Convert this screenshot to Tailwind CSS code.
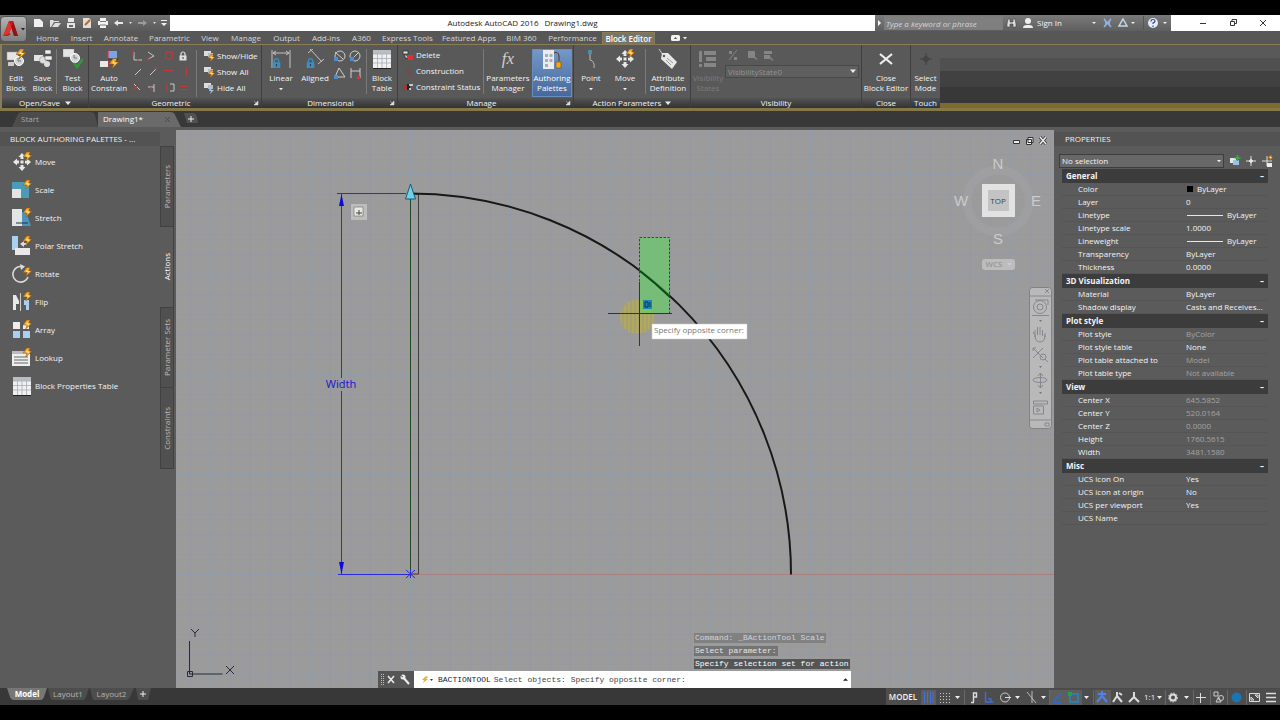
<!DOCTYPE html>
<html lang="en">
<head>
<meta charset="utf-8">
<title>Autodesk AutoCAD 2016 - Drawing1.dwg</title>
<script src="https://cdn.jsdelivr.net/npm/@tailwindcss/browser@4"></script>
</head>
<body class="min-h-screen flex flex-col bg-black text-[8px] leading-[10px] text-gray-100 font-['Open_Sans','Noto_Sans',sans-serif]">

<!-- shared symbols -->
<svg class="hidden">
  <symbol id="bolt" viewBox="0 0 10 10"><path d="M4 0h4L6.500 3.500H10L3 10l1.500-4.500H0z" fill="#f5a623" stroke="#8a5510" stroke-width=".6"/><path d="M5 2L3 5h3L5 7l3-3H5z" fill="#ffe9a0"/></symbol>
  <symbol id="move" viewBox="0 0 20 20"><path d="M10 1l3.500 4h-2v2h-3V5h-2zM10 19l3.500-4h-2v-2h-3v2h-2zM1 10l4-3.500v2h2v3H5v2zM19 10l-4-3.500v2h-2v3h2v2z" fill="#e8e8e8"/><rect x="8.500" y="8.500" width="3" height="3" fill="#e8e8e8"/><use href="#bolt" x="11" y="0" width="9" height="9"/></symbol>
  <symbol id="grid" viewBox="0 0 20 20"><path d="M1 1h18v18H1z" fill="#f0f0f0"/><path d="M1 1h18v4H1z" fill="#b9bec6"/><path d="M1 9.500h18M1 14h18M5.500 5v14M10 5v14M14.500 5v14M1 5h18" stroke="#a8acb2" stroke-width=".8"/><path d="M1 19.500h18" stroke="#222"/></symbol>
  <symbol id="blk" viewBox="0 0 20 20"><rect x="1" y="3" width="11" height="8" fill="#e4e4e4" stroke="#999" stroke-width=".5"/><circle cx="13" cy="12" r="4.500" fill="#d4d4d4" stroke="#fff"/><path d="M12 9v3h3" fill="none" stroke="#777"/></symbol>
  <symbol id="lock" viewBox="0 0 10 10"><path d="M3 5V3a2 2 0 0 1 4 0v2" fill="none" stroke="currentColor" stroke-width="1.200"/><rect x="1.500" y="4.500" width="7" height="5" fill="currentColor"/><path d="M5 6v2" stroke="#333"/></symbol>
  <symbol id="caret" viewBox="0 0 6 6"><path d="M0 1.500h6L3 5z" fill="#eee"/></symbol>
  <symbol id="corner" viewBox="0 0 6 6"><path d="M1 1l3 3M5 1v4H1z" stroke="#ddd" fill="#ddd" stroke-width=".5"/></symbol>
  <symbol id="show" viewBox="0 0 12 12"><rect x="1" y="1" width="7" height="5" fill="#dedede"/><rect x="5" y="3" width="5" height="4" fill="#b8bcc0"/></symbol>
</svg>

<div class="h-[15px] shrink-0 bg-black"></div>

<!-- title bar -->
<header class="relative flex h-4 shrink-0 items-stretch bg-white">
  <button aria-label="Application menu" class="absolute left-0 top-px z-10 flex h-[26px] w-[27px] items-center justify-center rounded-sm border border-[#555] bg-gradient-to-b from-[#b4b4b4] to-[#7f7f7f]">
    <svg class="h-[22px] w-[25px]" viewBox="0 0 25 22"><path d="M8 3h4l5 15h-4l-2.500-8-2.500 5 2 1-3 2H2z" fill="#c41d1d"/><path d="M8 3l2.500 7L7 16l-5 2z" fill="#e0352e"/><path d="M10.500 10L12 3l5 15h-4z" fill="#961313"/><path d="M20 10h4l-2 2.500z" fill="#222"/></svg>
  </button>
  <nav aria-label="Quick access" class="flex w-[170px] shrink-0 items-center bg-gradient-to-b from-[#737373] to-[#5a5a5a] pl-[32px]">
    <svg class="h-4 w-[138px]" viewBox="0 0 138 16">
      <path d="M2 4h6l3 3v5H2z" fill="#f0f0f0"/>
      <path d="M18 5h3l1 1h5v1h-5l-3 5h-1zM20 12l3-4h6l-3 4z" fill="#ddd"/>
      <path d="M36 3h6v4h-6zM35 8h8v5h-8z" fill="#e4e4e4"/><path d="M37 10h4v2h-4z" fill="#666"/>
      <path d="M51 3h6l2 2v8h-8z" fill="#ddd"/><path d="M53 10l5-5" stroke="#b8672d" stroke-width="2"/>
      <path d="M68 3h6v3h-6zM66 6h10v4H66zM68 10h6v3h-6z" fill="#f2f2f2"/><path d="M68 6.500h6M68 10h6" stroke="#777"/>
      <path d="M82 8l4-3v2h5v2h-5v2z" fill="#e8e8e8"/><path d="M97 7h3l-1.500 2z" fill="#ddd"/>
      <path d="M115 8l-4-3v2h-5v2h5v2z" fill="#9a9a9a"/><path d="M121 7h3l-1.500 2z" fill="#ddd"/>
      <path d="M129 5h6v1h-6zM129 8h6l-3 3z" fill="#f0f0f0"/>
    </svg>
  </nav>
  <h1 class="flex flex-1 items-center justify-center gap-[6px] text-[#222]"><span>Autodesk AutoCAD 2016</span><span>Drawing1.dwg</span></h1>
  <div class="flex w-[296px] shrink-0 items-center bg-gradient-to-b from-[#7a7a7a] to-[#5f5f5f]">
    <svg class="h-3 w-[9px]" viewBox="0 0 9 12"><path d="M3 3l3 3-3 3z" fill="#fff"/></svg>
    <input aria-label="Search" placeholder="Type a keyword or phrase" class="h-[14px] w-[119px] border border-[#7d7d7d] bg-[#7f7f7f] px-px italic placeholder:text-gray-300">
    <svg class="h-4 w-[34px]" viewBox="0 0 34 16"><path d="M5 4h2v3h3V4h2l1 5v3h-3V9H7v3H4V9z" fill="#ddd" stroke="#444" stroke-width=".6"/><circle cx="25" cy="6" r="3" fill="#eee"/><path d="M20 13q0-3 4-3h2q4 0 4 3z" fill="#eee"/></svg>
    <button class="w-[55px] text-left">Sign In</button>
    <svg class="h-4 w-[77px]" viewBox="0 0 77 16"><path d="M0 7h4l-2 2z" fill="#eee"/><path d="M12 4q4 4 0 8M19 4q-4 4 0 8M12 4l7 8M19 4l-7 8" stroke="#8fb1e6" stroke-width="1.500" fill="none"/><path d="M31 4l4 7h-8z" fill="none" stroke="#c7d5ec" stroke-width="1.500"/><path d="M39 7h4l-2 2z" fill="#eee"/><path d="M51.500 1v14" stroke="#555"/><circle cx="61" cy="8" r="5" fill="#e6ebf7"/><path d="M71 7h4l-2 2z" fill="#eee"/><path d="M59 6.500q0-2 2-2t2 1.500-2 2v1M61 10.500v1.500" stroke="#334a8f" stroke-width="1.200" fill="none"/></svg>
  </div>
  <div class="flex w-[109px] shrink-0 items-center pl-[17px]">
    <button aria-label="Minimize" class="w-[30px]"><svg class="mx-auto size-[10px]" viewBox="0 0 10 10"><path d="M2 5.500h6" stroke="#333"/></svg></button>
    <button aria-label="Restore" class="w-[30px]"><svg class="mx-auto size-[10px]" viewBox="0 0 10 10"><path d="M2.500 3.500h4v4h-4zM4 3.500v-2h4.500v4h-2" fill="none" stroke="#333"/></svg></button>
    <button aria-label="Close" class="w-[30px]"><svg class="mx-auto size-[10px]" viewBox="0 0 10 10"><path d="M2 2l6 6M8 2l-6 6" stroke="#333"/></svg></button>
  </div>
</header>

<!-- ribbon tabs -->
<nav aria-label="Ribbon tabs" class="flex h-[14px] shrink-0 items-stretch border-b border-[#8a7d55] bg-[#575757] pl-[30px] text-[#d6d6d6]">
  <button class="w-[35px]">Home</button><button class="w-[33px]">Insert</button><button class="w-[46px]">Annotate</button><button class="w-[51px]">Parametric</button><button class="w-[30px]">View</button><button class="w-[42px]">Manage</button><button class="w-[39px]">Output</button><button class="w-[40px]">Add-ins</button><button class="w-[31px]">A360</button><button class="w-[61px]">Express Tools</button><button class="w-[62px]">Featured Apps</button><button class="w-[43px]">BIM 360</button><button class="w-[59px]">Performance</button>
  <button class="mt-px w-[53px] border-x border-t border-[#857b58] bg-[#77746a] font-semibold text-white">Block Editor</button>
  <button aria-label="Minimize ribbon" class="w-[48px]"><svg class="mx-auto h-2 w-4" viewBox="0 0 16 8"><rect y="1" width="9" height="6" rx="1.500" fill="#f2f2f2"/><path d="M3 5l1.500-2L6 5z" fill="#444"/><path d="M12 3h4l-2 2.500z" fill="#eee"/></svg></button>
</nav>

<!-- ribbon -->
<section aria-label="Block Editor ribbon" class="flex h-[66px] shrink-0 border-b-[3px] border-[#857848] bg-[#595959] text-center">
  <div class="flex w-[89px] shrink-0 flex-col border-l-2 border-r border-l-[#8a7d55] border-r-[#3f3f3f]">
    <div class="flex flex-1 pt-1">
      <button class="flex w-[28px] flex-col items-center"><svg class="size-5" viewBox="0 0 20 20"><use href="#blk"/><rect x="2" y="13" width="6" height="4" fill="#ccc"/><use href="#bolt" x="10" y="0" width="10" height="10"/></svg><span class="pt-1">Edit<br>Block</span></button>
      <button class="flex w-[25px] flex-col items-center"><svg class="size-5" viewBox="0 0 20 20"><rect x="1" y="6" width="9" height="6" fill="#e4e4e4"/><circle cx="10" cy="11" r="3.500" fill="#ddd" stroke="#888" stroke-width=".5"/><path d="M12 1h6v4h-6zM12 7h7v4h-7z" fill="#eee" stroke="#444" stroke-width=".5"/><circle cx="14" cy="15" r="3" fill="#ddd"/></svg><span class="pt-1">Save<br>Block</span></button>
      <button class="mb-1 ml-px flex flex-1 flex-col items-center border-l border-[#7a7a7a]"><svg class="size-5" viewBox="0 0 20 20"><g transform="translate(-1 -3)"><use href="#blk"/></g><path d="M11 14l3 4 6-8" fill="none" stroke="#2f9a35" stroke-width="2.500"/></svg><span class="pt-1">Test<br>Block</span></button>
    </div>
    <div class="flex h-[10px] items-center justify-center gap-[5px] bg-gradient-to-b from-[#545454] to-[#333]">Open/Save <svg class="size-[6px]"><use href="#caret"/></svg></div>
  </div>

  <div class="flex w-[173px] shrink-0 flex-col border-r border-[#3f3f3f]">
    <div class="flex flex-1 pt-1">
      <button class="flex w-[40px] flex-col items-center"><svg class="size-5" viewBox="0 0 20 20"><path d="M9 2h9v8H9z" fill="#7aa4e8"/><path d="M9 1v18" stroke="#d33" stroke-width="1.200"/><path d="M1 12h8v6H1z" fill="#e8e8e8"/><path d="M9 10h10" stroke="#222"/><use href="#bolt" x="10" y="9" width="10" height="11"/></svg><span class="pt-1">Auto<br>Constrain</span></button>
      <svg class="h-[48px] w-[66px]" viewBox="129 49 66 48" fill="none" role="img" aria-label="Geometric constraints">
        <g stroke="#c8c8c8"><path d="M134 52v8h8M148 52l6 4-6 3"/><path d="M135 75l6-6M150 75l6-6" /><path d="M134 84l6 6M148 87h6M154 84v8M170 84h4v7h-4"/></g>
        <g stroke="#c03a3a" stroke-width="1.200"><path d="M133 50v5M137 60h2M150 57l-4 3"/><circle cx="169" cy="56" r="3.500"/><path d="M165 52h8M164 70.500h10M186.500 67v9M155 69l2-2M133 90l4-4M167 84v7M180 86.500h8M180 89.500h8M151 87v3"/></g>
        <use href="#lock" x="178" y="51" width="10" height="10" color="#dedede"/>
      </svg>
      <div class="my-px ml-px flex flex-col justify-between border-l border-[#7a7a7a] pb-[3px] pl-[6px]">
        <button class="flex h-3 items-center gap-[2px]"><svg class="size-3"><use href="#show"/><use href="#bolt" x="5" y="4" width="7" height="8"/></svg>Show/Hide</button>
        <button class="flex h-3 items-center gap-[2px]"><svg class="size-3"><use href="#show"/><use href="#bolt" x="5" y="4" width="7" height="8"/></svg>Show All</button>
        <button class="flex h-3 items-center gap-[2px]"><svg class="size-3"><use href="#show"/><path d="M7 5h3L8 8h3l-4 4 1-3H6z" fill="#9cc6ea"/></svg>Hide All</button>
      </div>
    </div>
    <div class="flex h-[10px] items-center bg-gradient-to-b from-[#545454] to-[#333] pr-[2px]"><span class="flex-1">Geometric</span><svg class="size-[6px]"><use href="#corner"/></svg></div>
  </div>

  <div class="flex w-[136px] shrink-0 flex-col border-r border-[#3f3f3f]">
    <div class="flex flex-1 pt-1">
      <button class="flex w-[38px] flex-col items-center"><svg class="size-5" viewBox="0 0 20 20"><path d="M1 1v18M19 1v18M2 4h16M5 2L2 4l3 2M15 2l3 2-3 2" stroke="#c4c4c4" fill="none"/><use href="#lock" x="0" y="8" width="11" height="12" color="#3c8fc4"/></svg><span class="pt-1">Linear</span><svg class="mt-1 size-1"><use href="#caret" width="4" height="4"/></svg></button>
      <button class="flex w-[30px] flex-col items-center"><svg class="size-5" viewBox="0 0 20 20"><path d="M5 0l12 13M3 4l6-5M13 15l6-5" stroke="#c4c4c4" fill="none"/><use href="#lock" x="0" y="8" width="11" height="12" color="#3c8fc4"/></svg><span class="pt-1">Aligned</span></button>
      <svg class="h-[32px] w-[34px] " viewBox="330 48 34 32" fill="none" role="img" aria-label="Dimension constraints"><g stroke="#cfcfcf"><circle cx="340" cy="55" r="5"/><circle cx="355" cy="55" r="5"/><path d="M335 51l8 7M350 60l9-9M335 76l4-9 6 9zM351 67v10M360 67v10M351 70h9"/></g><path d="M334 56h4v4h-4zM350 56h4v4h-4zM334 74h4v4h-4z" fill="#4a8ed0"/><path d="M357 75h3v3h-3z" fill="#d33"/></svg>
      <button class="mb-1 ml-[2px] flex flex-1 flex-col items-center border-l border-[#7a7a7a]"><svg class="size-5"><use href="#grid"/></svg><span class="pt-1">Block<br>Table</span></button>
    </div>
    <div class="flex h-[10px] items-center bg-gradient-to-b from-[#545454] to-[#333] pr-[2px]"><span class="flex-1 pl-[26px]">Dimensional</span><svg class="ml-4 size-[6px]"><use href="#corner"/></svg></div>
  </div>

  <div class="flex w-[176px] shrink-0 flex-col border-r border-[#3f3f3f]">
    <div class="flex flex-1 pt-1">
      <div class="mb-1 flex w-[86px] flex-col justify-between border-r border-[#7a7a7a] pb-px pl-1">
        <button class="flex h-3 items-center gap-[2px]"><svg class="size-3" viewBox="0 0 12 12"><path d="M1 2h5v3H1zM3 5v4h3" fill="#ddd" stroke="#222" stroke-width=".7"/><path d="M6 6h5v5H6z" fill="#e03030"/></svg>Delete</button>
        <button class="flex h-3 items-center gap-[2px]"><svg class="size-3" viewBox="0 0 12 12"><path d="M3 2l6 8M9 2L5 6l4 5" stroke="#a83232" stroke-dasharray="2 1" fill="none"/></svg>Construction</button>
        <button class="flex h-3 items-center gap-[2px]"><svg class="size-3" viewBox="0 0 12 12"><path d="M1 4h4v4H1z" fill="#a33"/><path d="M5 3h3v6H5z" fill="#222"/><path d="M7 4h4M7 8h2" stroke="#eee" stroke-width="1.500"/></svg><span class="whitespace-nowrap">Constraint Status</span></button>
      </div>
      <button class="flex w-[48px] flex-col items-center"><span class="h-5 font-['Liberation_Serif',serif] text-[17px] leading-5 italic text-[#d0d0d0]">fx</span><span class="pt-1">Parameters<br>Manager</span></button>
      <button class="flex h-[48px] w-[40px] flex-col items-center border border-[#6a8dbd] bg-gradient-to-b from-[#7399c8] to-[#47689c]"><svg class="size-5" viewBox="0 0 20 20"><rect x="1" y="0" width="11" height="19" fill="#e9edf2"/><path d="M3 4h3v3H3zM7.500 4h3v3h-3zM3 9h3v3H3zM7.500 9h3v3h-3zM3 14h3v3H3z" fill="#a7aeb8"/><path d="M12 3q4-2 5 3v5" fill="none" stroke="#55331c"/><rect x="14" y="12" width="5" height="6" fill="#f0a820" stroke="#76500c" stroke-width=".6"/></svg><span class="pt-[3px] text-white">Authoring<br>Palettes</span></button>
    </div>
    <div class="flex h-[10px] items-center bg-gradient-to-b from-[#545454] to-[#333] pr-[2px]"><span class="flex-1">Manage</span><svg class="size-[6px]"><use href="#corner"/></svg></div>
  </div>

  <div class="flex w-[117px] shrink-0 flex-col border-r border-[#3f3f3f]">
    <div class="flex flex-1 pt-1">
      <button class="flex w-[34px] flex-col items-center"><svg class="size-5" viewBox="0 0 20 20"><rect x="7" y="1" width="4" height="4" fill="#4a8fae"/><path d="M9 5v6q5 1 4 8" stroke="#bbb" fill="none"/></svg><span class="pt-1">Point</span><svg class="mt-1 size-1"><use href="#caret" width="4" height="4"/></svg></button>
      <button class="flex w-[34px] flex-col items-center"><svg class="size-5"><use href="#move"/></svg><span class="pt-1">Move</span><svg class="mt-1 size-1"><use href="#caret" width="4" height="4"/></svg></button>
      <button class="mb-1 ml-[3px] flex flex-1 flex-col items-center border-l border-[#7a7a7a]"><svg class="size-5" viewBox="0 0 20 20"><path d="M1 0l4 6" stroke="#ccc"/><path d="M4 4h6l9 9-5 7-11-10z" fill="#e8e8e8"/><circle cx="6" cy="7" r="1.200" fill="#555"/><path d="M9 9l6 5M8 11l5 5" stroke="#999"/></svg><span class="pt-1">Attribute<br>Definition</span></button>
    </div>
    <div class="flex h-[10px] items-center justify-center gap-1 bg-gradient-to-b from-[#545454] to-[#333]">Action Parameters <svg class="size-[6px]"><use href="#caret"/></svg></div>
  </div>

  <div class="flex w-[171px] shrink-0 flex-col border-r border-[#3f3f3f]">
    <div class="flex flex-1 pt-1">
      <button disabled class="flex w-[34px] flex-col items-center text-[#7b7b7b]"><svg class="size-5" viewBox="0 0 20 20" fill="#868686"><path d="M1 2h3v11H1zM6 2h12v4H6zM8 8h10v4H8zM6 14h12v4H6zM1 15h3v3H1z"/></svg><span class="pt-1">Visibility<br>States</span></button>
      <div class="flex flex-1 flex-col">
        <svg class="h-3 w-[60px]" viewBox="0 0 60 12" fill="#858585" role="img" aria-label="Visibility tools"><path d="M4 2h3v3H4zM9 8h3v3H9z"/><path d="M12 1l-8 10" stroke="#858585"/><path d="M23 2h7v7h-7zM28 5l5 6-3-1zM39 2h8v3h-8zM39 6h6v4h-6zM44 6l5 6-3-1z"/></svg>
        <select aria-label="Visibility state" disabled class="mt-1 h-[13px] w-[134px] appearance-none border border-[#484848] bg-[#5f5f5f] px-[2px] text-[#929292]"><option>VisibilityState0</option></select>
        <svg class="-mt-[10px] ml-[125px] size-[6px]"><use href="#caret"/></svg>
      </div>
    </div>
    <div class="h-[10px] bg-gradient-to-b from-[#545454] to-[#333]">Visibility</div>
  </div>

  <div class="flex w-[49px] shrink-0 flex-col border-r border-[#3f3f3f]">
    <button class="flex flex-1 flex-col items-center pt-1"><svg class="size-5" viewBox="0 0 20 20"><path d="M4 5l12 10M16 5L4 15" stroke="#eee" stroke-width="2.200"/></svg><span class="pt-1 whitespace-nowrap">Close<br>Block Editor</span></button>
    <div class="h-[10px] bg-gradient-to-b from-[#545454] to-[#333]">Close</div>
  </div>
  <div class="flex w-[29px] shrink-0 flex-col">
    <button class="flex flex-1 flex-col items-center pt-1"><svg class="size-5" viewBox="0 0 20 20"><path d="M10 4v12M4 10h12M8 8h4v4H8z" stroke="#3f3f3f" fill="none"/></svg><span class="pt-1">Select<br>Mode</span></button>
    <div class="h-[10px] bg-gradient-to-b from-[#4c5054] to-[#26364a]">Touch</div>
  </div>
  <div class="flex flex-1 flex-col border-b-[5px] border-[#7e692e]">
    <div class="h-[13px] bg-[#595959]"></div><div class="h-[13px] bg-[#505050]"></div><div class="h-4 bg-[#414141]"></div><div class="flex-1 bg-[#383838]"></div>
  </div>
</section>

<!-- drawing tabs -->
<nav aria-label="Drawings" class="relative flex h-[19px] shrink-0 items-end border-b-[3px] border-[#5b5b5b] bg-[#383838] pl-[12px]">
  <button class="relative h-4 w-[86px] text-left"><svg class="absolute inset-0 h-full w-full" viewBox="0 0 86 16" preserveAspectRatio="none"><path d="M0 16L6 3q1-2 4-2h68q4 0 5 3l3 12z" fill="#4c4c4c"/></svg><span class="relative pl-[9px] text-[#a9a9a9]">Start</span></button>
  <button class="relative h-4 w-[84px] text-left"><svg class="absolute inset-0 h-full w-full" viewBox="0 0 84 16" preserveAspectRatio="none"><path d="M0 16L-3 4q-1-3 3-3h72q4 0 5 3l6 12z" fill="#6a6a6a"/><path d="M67 6l5 5M72 6l-5 5" stroke="#4b4b4b"/></svg><span class="relative pl-[5px] font-medium text-white">Drawing1*</span></button>
  <button aria-label="New drawing" class="ml-[2px] h-[15px] w-[14px]"><svg viewBox="0 0 14 15"><path d="M0 1h9q3 0 4 4l1 6H3z" fill="#515151"/><path d="M7 4v6M4 7h6" stroke="#eee"/></svg></button>
</nav>

<main class="flex min-h-0 flex-1 bg-[#5b5b5b]">
  <!-- block authoring palettes -->
  <aside class="flex w-[176px] shrink-0">
    <div class="flex w-[160px] flex-col">
      <h2 class="mt-[2px] h-[14px] bg-[#535353] pl-[10px] leading-[14px] text-[#f0f0f0]">BLOCK AUTHORING PALETTES - ...</h2>
      <ul class="mt-[2px]">
        <li><button class="flex h-7 items-center gap-[3px] pl-3"><svg class="size-5"><use href="#move"/></svg>Move</button></li>
        <li><button class="flex h-7 items-center gap-[3px] pl-3"><svg class="size-5" viewBox="0 0 20 20"><path d="M0 2h17v16H0z" fill="#4b9bb8"/><path d="M0 9h9v9H0z" fill="#e4e4e4"/><use href="#bolt" x="11" y="0" width="9" height="9"/></svg>Scale</button></li>
        <li><button class="flex h-7 items-center gap-[3px] pl-3"><svg class="size-5" viewBox="0 0 20 20"><path d="M0 1h10v17H0z" fill="#e4e4e4"/><path d="M10 4h4l5 14h-9z" fill="#4a94bd"/><path d="M4 15h12" stroke="#234"/><use href="#bolt" x="11" y="0" width="9" height="9"/></svg>Stretch</button></li>
        <li><button class="flex h-7 items-center gap-[3px] pl-3"><svg class="size-5" viewBox="0 0 20 20"><path d="M0 0h6v14H0z" fill="#a9cff2"/><path d="M3 12h15v7H3z" fill="#e9e9e9"/><path d="M8 8l4-3v2h3v2h-3v2z" fill="#ddd"/><use href="#bolt" x="11" y="0" width="9" height="9"/></svg>Polar Stretch</button></li>
        <li><button class="flex h-7 items-center gap-[3px] pl-3"><svg class="size-5" viewBox="0 0 20 20"><path d="M16 13A7.800 7.800 0 1 1 10 2.600" fill="none" stroke="#d8d8d8" stroke-width="1.600"/><path d="M8 0l5 2.500L9 6z" fill="#ddd"/><use href="#bolt" x="11" y="3" width="9" height="10"/></svg>Rotate</button></li>
        <li><button class="flex h-7 items-center gap-[3px] pl-3"><svg class="size-5" viewBox="0 0 20 20"><path d="M1 3h3l3 6v3H4v6H1z" fill="#e8e8e8"/><path d="M8.500 1v18" stroke="#ccc"/><path d="M16 8h-4v5h2v5h3V8z" fill="#a9cff2"/><use href="#bolt" x="11" y="0" width="9" height="9"/></svg>Flip</button></li>
        <li><button class="flex h-7 items-center gap-[3px] pl-3"><svg class="size-5" viewBox="0 0 20 20"><path d="M1 2h7v7H1zM11 5h6v4h-6z" fill="#eee"/><path d="M1 11h7v7H1zM11 11h7v7h-7z" fill="#a9cff2"/><use href="#bolt" x="11" y="0" width="9" height="9"/></svg>Array</button></li>
        <li><button class="flex h-7 items-center gap-[3px] pl-3"><svg class="size-5" viewBox="0 0 20 20"><path d="M0 3h18v15H0z" fill="#eee"/><path d="M0 3h18v3H0z" fill="#bbb"/><path d="M2 9h14M2 12h14M2 15h14" stroke="#666"/><use href="#bolt" x="11" y="0" width="9" height="9"/></svg>Lookup</button></li>
        <li><button class="flex h-7 items-center gap-[3px] pl-3"><svg class="size-5"><use href="#grid"/></svg>Block Properties Table</button></li>
      </ul>
    </div>
    <div role="tablist" aria-label="Palettes" class="mt-4 flex w-[14px] flex-col text-[#bdbdbd]">
      <button role="tab" class="flex h-[81px] items-center justify-center border border-[#414141] bg-[#505050]"><span class="rotate-180 [writing-mode:vertical-rl]">Parameters</span></button>
      <button role="tab" class="flex h-[80px] items-center justify-center border-r border-[#414141] text-white"><span class="rotate-180 [writing-mode:vertical-rl]">Actions</span></button>
      <button role="tab" class="flex h-[81px] items-center justify-center border border-[#414141] bg-[#505050]"><span class="rotate-180 [writing-mode:vertical-rl]">Parameter Sets</span></button>
      <button role="tab" class="flex h-[81px] items-center justify-center border border-t-0 border-[#414141] bg-[#505050]"><span class="rotate-180 [writing-mode:vertical-rl]">Constraints</span></button>
    </div>
  </aside>

  <!-- drawing area -->
  <section aria-label="Drawing area" class="relative min-w-0 flex-1 overflow-hidden bg-[#9b9b9b]">
    <svg class="absolute inset-0 h-full w-full" viewBox="176 130 878 558" preserveAspectRatio="xMidYMid slice">
      <defs>
        <pattern id="gridlines" x="410" y="574" width="100" height="100" patternUnits="userSpaceOnUse">
          <path d="M20.500 0v100M40.500 0v100M60.500 0v100M80.500 0v100M0 20.500h100M0 40.500h100M0 60.500h100M0 80.500h100" stroke="#9292a6" stroke-width="1" opacity=".45"/>
          <path d="M.5 0v100M0 .5h100" stroke="#889eb0" stroke-width="1" opacity=".6"/>
        </pattern>
        <pattern id="stripes" width="4" height="8" patternUnits="userSpaceOnUse"><rect width="4" height="8" fill="#b0a648"/><rect width="2" height="8" fill="#c3b52d"/></pattern>
      </defs>
      <rect x="176" y="130" width="878" height="558" fill="url(#gridlines)"/>
      <path d="M410 574.500h644" stroke="#a98080"/>
      <path d="M410.500 193v381" stroke="#1f4a2a"/><path d="M418.500 194v380h-8M410 194h9" stroke="#3d3d3d" fill="none"/>
      <path d="M410 193.500A381 381 0 0 1 791 574.500" fill="none" stroke="#181818" stroke-width="2"/>
      <g fill="#2a2af0"><rect x="337" y="193" width="69" height="1"/><rect x="341" y="194" width="1" height="184"/><rect x="341" y="391" width="1" height="183"/></g>
      <path d="M338 574.500h73M406 570l9 8M406 578l9-8M410.500 569v9" stroke="#2a2ae0" fill="none"/>
      <path d="M341.500 194l2.500 12h-5zM341.500 574l2.500-12h-5z" fill="#0b0be0"/>
      <text x="341" y="388" text-anchor="middle" font-family="Noto Sans, sans-serif" font-size="11" fill="#2020d0">Width</text>
      <path d="M410.500 184l5 15h-10z" fill="#6fd3e8" stroke="#1c5970"/>
      <rect x="351" y="204" width="16" height="16" fill="#bdbdbd"/><rect x="354" y="207" width="9" height="9" fill="#e9e9e2" stroke="#777" stroke-width=".7"/><path d="M356 213h6M359 210v5" stroke="#444"/>
      <circle cx="637" cy="317" r="17" fill="url(#stripes)" opacity=".55"/>
      <rect x="639.500" y="237.500" width="30" height="76" fill="#5fd35f" fill-opacity=".6" stroke="#3a4a3a" stroke-dasharray="2.500 1.500"/>
      <path d="M640 271A381 381 0 0 1 670 297" fill="none" stroke="#0f4a1a" stroke-width="2"/>
      <path d="M608 313.500h64M639.500 282v64" stroke="#2e3350"/>
      <path d="M643 300h9v9h-9z" fill="#1b86b8"/><path d="M645 302v5M645 302h3v5h-3M650 302v5" stroke="#0c3450" fill="none"/>
      <rect x="652" y="324" width="95" height="15" fill="#fff" stroke="#ccc" stroke-width=".5"/>
      <text x="654" y="333" font-size="8" fill="#777">Specify opposite corner:</text>

      <g stroke="#2b2b33" fill="none"><path d="M189.500 641v33h33M187.500 671.500h5v5h-5zM191 629l4 4v4M199 629l-4 4M226 666l8 8M234 666l-8 8"/></g>
      <circle cx="998" cy="201" r="31" fill="none" stroke="#9f9fa1" stroke-width="9"/>
      <g fill="#cbcbcb" font-size="15" text-anchor="middle" font-family="Liberation Sans, sans-serif"><text x="998" y="169">N</text><text x="998" y="244">S</text><text x="961" y="206">W</text><text x="1036" y="206">E</text></g>
      <rect x="982" y="184" width="33" height="33" fill="#e2e2e2"/><rect x="988" y="190" width="21" height="21" fill="#c3c3c3"/>
      <text x="998" y="204" text-anchor="middle" font-size="8" fill="#444">TOP</text>
      <rect x="982" y="259" width="33" height="11" rx="3" fill="#bdbdbd"/><text x="994" y="267" text-anchor="middle" font-size="8" fill="#8b8b8b">WCS</text><path d="M1007 263h5l-2.500 3z" fill="#ccc"/>
      <g fill="#eee" stroke="#333"><path d="M1013.500 140.500h6v3h-6z"/><path d="M1028 137.500h5v5h-5zM1026.500 139.500h5v5h-5z"/></g><path d="M1040 137l6 7M1046 137l-6 7" stroke="#333" stroke-width="3"/><path d="M1040 137l6 7M1046 137l-6 7" stroke="#eee" stroke-width="1.500"/>
      <rect x="1029.500" y="287.500" width="22" height="141" rx="3" fill="#b9b9b9" stroke="#828282"/>
      <g fill="none" stroke="#868690"><path d="M1030 296h21M1030 420h21M1045 289l4 4M1049 289l-4 4"/><circle cx="1040" cy="307" r="6.500"/><circle cx="1040" cy="307" r="3"/><path d="M1035 300h13v5M1032 315.500h17"/><path d="M1035 335l-2-3M1035 337v-7M1037.500 335v-8M1040 335v-8M1042.500 336v-6M1045 337v-4M1035 335q0 7 5 7t5-7"/><path d="M1033 348l10 10M1043 348l-10 10M1033 348h3M1033 348v3"/><circle cx="1043" cy="357" r="3"/><path d="M1045 359l3 3"/><path d="M1040.500 373v15M1038 376l2.500-3 2.500 3M1038 385l2.500 3 2.500-3"/><ellipse cx="1040" cy="380" rx="7" ry="2.500"/><path d="M1033.500 401h14v3h-14zM1033.500 406h10v8h-10zM1037 408v4l3-2zM1045 423h4v3h-4z"/></g>
      <g fill="#777"><path d="M1039 320h3l-1.500 2zM1039 366h3l-1.500 2zM1039 392h3l-1.500 2z"/></g>
    </svg>

    <!-- command line -->
    <div class="absolute bottom-0 left-[202px] w-[473px] font-['Liberation_Mono',monospace]">
      <div class="mb-[2px] flex flex-col items-start gap-[3px] pl-[316px] whitespace-nowrap">
        <p class="bg-[#818181] px-px text-gray-300">Command: _BActionTool Scale</p>
        <p class="bg-[#747474] px-px text-gray-200">Select parameter:</p>
        <p class="bg-[#555] px-px text-white">Specify selection set for action</p>
      </div>
      <div class="flex h-[17px] items-center bg-white text-[#222]">
        <svg class="h-full w-[36px] shrink-0 bg-[#555]" viewBox="0 0 36 17"><path d="M3.500 3v11M5.500 3v11" stroke="#bbb" stroke-dasharray="1 1"/><path d="M10 5l6 7M16 5l-6 7" stroke="#eee" stroke-width="1.500"/><path d="M24 5l7 8" stroke="#eee" stroke-width="2"/><circle cx="25" cy="6" r="2.500" fill="#eee"/><path d="M22 4l3 2" stroke="#555"/></svg>
        <svg class="h-3 w-[21px] shrink-0" viewBox="0 0 21 12"><path d="M8 6l4-4 2 1-2 2h2l-5 4 1-3z" fill="#e0b23f"/><path d="M16 5h3l-1.500 2z" fill="#333"/></svg>
        <label for="cmd" class="pl-[3px]">BACTIONTOOL</label>
        <input id="cmd" value="Select objects: Specify opposite corner:" class="min-w-0 flex-1 pl-[3px] text-[#444]">
        <svg class="mr-[3px] size-[5px]" viewBox="0 0 6 6"><path d="M0 4.500h6L3 1.500z" fill="#222"/></svg>
      </div>
    </div>
  </section>

  <!-- properties -->
  <aside class="w-[226px] shrink-0">
    <h2 class="mt-[2px] h-[14px] bg-[#535353] pl-[11px] leading-[14px] text-[#f0f0f0]">PROPERTIES</h2>
    <div class="mt-2 flex items-center pl-[5px]">
      <div class="relative w-[165px]">
        <select aria-label="Selection" class="block h-[14px] w-full appearance-none border border-[#3d3d3d] bg-[#686868] px-[2px]"><option>No selection</option></select>
        <svg class="pointer-events-none absolute top-1 right-[2px] size-[6px]"><use href="#caret" x="1" y="1" width="4" height="4"/></svg>
      </div>
      <svg class="ml-[5px] h-[14px] w-[46px]" viewBox="0 0 46 14"><path d="M1 4h6v5H1z" fill="#dfe8f2"/><path d="M4 6h6v5H4z" fill="#9cc0e8"/><path d="M8.500 1v6M5.500 4h6" stroke="#36b336" stroke-width="1.500"/><path d="M22 2v10M17 7h10M22 5l2 2-2 2-2-2z" stroke="#ddd" fill="#fff"/><path d="M38 2v10M33 7h10" stroke="#ddd"/><path d="M38 9h5v4h-5z" fill="#eee"/><use href="#bolt" x="39" y="1" width="5" height="6"/></svg>
    </div>
    <table class="mt-px ml-2 w-[206px] table-fixed border-separate border-spacing-0 text-left [&_td]:h-[13px] [&_td]:truncate [&_td]:border-b [&_td]:border-[#555] [&_td]:p-0 [&_td:first-child]:pl-4 [&_th]:h-[14px] [&_th]:bg-[#3c3c3c] [&_th]:p-0 [&_th:first-child]:pl-1 [&_th:last-child]:pr-1 [&_th:last-child]:text-right">
      <colgroup><col class="w-[124px]"><col></colgroup>
      <tbody>
      <tr><th scope="rowgroup">General</th><th>–</th></tr>
      <tr><td>Color</td><td><span class="flex items-center gap-1 pl-px"><span class="size-[6px] bg-black"></span>ByLayer</span></td></tr>
      <tr><td>Layer</td><td>0</td></tr>
      <tr><td>Linetype</td><td><span class="flex items-center gap-1 pl-px"><span class="h-px w-[36px] bg-gray-200"></span>ByLayer</span></td></tr>
      <tr><td>Linetype scale</td><td>1.0000</td></tr>
      <tr><td>Lineweight</td><td><span class="flex items-center gap-1 pl-px"><span class="h-px w-[36px] bg-gray-200"></span>ByLayer</span></td></tr>
      <tr><td>Transparency</td><td>ByLayer</td></tr>
      <tr><td>Thickness</td><td>0.0000</td></tr>
      </tbody><tbody>
      <tr><th scope="rowgroup">3D Visualization</th><th>–</th></tr>
      <tr><td>Material</td><td>ByLayer</td></tr>
      <tr><td>Shadow display</td><td>Casts and Receives...</td></tr>
      </tbody><tbody>
      <tr><th scope="rowgroup">Plot style</th><th>–</th></tr>
      <tr><td>Plot style</td><td class="text-[#a3a3a3]">ByColor</td></tr>
      <tr><td>Plot style table</td><td>None</td></tr>
      <tr><td>Plot table attached to</td><td class="text-[#a3a3a3]">Model</td></tr>
      <tr><td>Plot table type</td><td class="text-[#a3a3a3]">Not available</td></tr>
      </tbody><tbody>
      <tr><th scope="rowgroup">View</th><th>–</th></tr>
      <tr><td>Center X</td><td class="text-[#a3a3a3]">645.5852</td></tr>
      <tr><td>Center Y</td><td class="text-[#a3a3a3]">520.0164</td></tr>
      <tr><td>Center Z</td><td class="text-[#a3a3a3]">0.0000</td></tr>
      <tr><td>Height</td><td class="text-[#a3a3a3]">1760.5615</td></tr>
      <tr><td>Width</td><td class="text-[#a3a3a3]">3481.1580</td></tr>
      </tbody><tbody>
      <tr><th scope="rowgroup">Misc</th><th>–</th></tr>
      <tr><td>UCS icon On</td><td>Yes</td></tr>
      <tr><td>UCS icon at origin</td><td>No</td></tr>
      <tr><td>UCS per viewport</td><td>Yes</td></tr>
      <tr><td>UCS Name</td><td></td></tr>
      </tbody>
    </table>
  </aside>
</main>

<!-- layout tabs and status bar -->
<footer class="flex h-[17px] shrink-0 items-stretch bg-[#383838]">
  <nav aria-label="Layouts" class="flex items-start pl-[7px] text-[#b5b5b5]">
    <button class="relative h-3 w-[40px] font-bold text-white"><svg class="absolute inset-0" viewBox="0 0 40 12"><path d="M0 0h40l-3 9q-1 3-3 3H7q-3 0-4-3z" fill="#777"/></svg><span class="relative">Model</span></button>
    <button class="relative h-3 w-[42px]"><svg class="absolute inset-0" viewBox="0 0 42 12"><path d="M1 0h41l-3 9q-1 3-3 3H5q-1 0-2-3z" fill="#4d4d4d"/></svg><span class="relative">Layout1</span></button>
    <button class="relative h-3 w-[45px]"><svg class="absolute inset-0" viewBox="0 0 45 12"><path d="M1 0h44l-4 9q-1 3-3 3H5q-1 0-2-3z" fill="#4d4d4d"/></svg><span class="relative">Layout2</span></button>
    <button aria-label="New layout" class="h-3 w-[17px]"><svg viewBox="0 0 17 12"><path d="M2 0h15l-3 12H4z" fill="#4d4d4d"/><path d="M9 3v6M6 6h6" stroke="#eee"/></svg></button>
  </nav>
  <div class="ml-auto flex w-[394px] items-center border-t border-[#4a4a4a] bg-[#4d4d4d]">
    <button class="w-[34px] font-semibold">MODEL</button>
    <svg class="h-4 w-[360px]" viewBox="920 689 360 16" fill="none" role="img" aria-label="Drawing aids">
      <g fill="#5e5e5e"><path d="M921 690h15v15h-15zM1050 690h32v15h-32zM1095 690h16v15h-16z"/></g>
      <path d="M924.500 692v11M927.500 692v11M930.500 692v11M933 692v11" stroke="#4670dc"/>
      <path d="M940 693.500h11M940 696.500h11M940 699.500h11M940 702.500h11" stroke="#ccc" stroke-dasharray="1 2"/>
      <g fill="#eee"><path d="M955 696h5l-2.500 3zM1015 696h5l-2.500 3zM1041 696h5l-2.500 3zM1084 696h5l-2.500 3zM1157 696h5l-2.500 3zM1184 696h5l-2.500 3z"/></g>
      <path d="M964.500 690v15M1049.500 690v15M1093.500 690v15M1165.500 690v15M1193.500 690v15M1210.500 690v15M1227.500 690v15M1246.500 690v15" stroke="#686868"/>
      <path d="M971 702.500h3M973.500 702v-9h3v4h-3" stroke="#ddd" stroke-width="1.400"/>
      <path d="M985.500 692v10h8M988 699h3v3" stroke="#3f6ddd" stroke-width="1.400"/>
      <circle cx="1005" cy="697.500" r="4.500" stroke="#ccc"/><path d="M1005 697.500h6" stroke="#ddd"/>
      <path d="M1027 692l9 11M1032 691v12" stroke="#bbb"/>
      <path d="M1053 702l8-9M1053 702.500h8" stroke="#3168ce" stroke-width="1.500"/>
      <path d="M1070 694h8v8h-8z" stroke="#218bc4" stroke-width="1.500"/><path d="M1068 692h4v4h-4z" fill="#20a050"/>
      <g stroke-width="2"><path d="M1102 691v5l-5 6M1102 696l5 6M1098 694h8" stroke="#4c83ef"/><path d="M1117 692v4l-4 6M1117 696l5 6M1119 693l3 2" stroke="#ddd"/><path d="M1134 692v5l-5 5M1134 697l5 5" stroke="#ddd"/></g>
      <text x="1144" y="700" fill="#eee" font-size="8">1:1</text>
      <circle cx="1173" cy="697.500" r="3" stroke="#ddd" stroke-width="2"/><circle cx="1173" cy="697.500" r="4.500" stroke="#ddd" stroke-dasharray="1.500 1.500"/>
      <path d="M1200.500 693v10M1196 697.500h10" stroke="#ddd"/>
      <path d="M1214 692h4v4h-4zM1216 702l2.500-5 2.500 5z" stroke="#ccc"/><circle cx="1221" cy="698" r="2.500" stroke="#ccc"/>
      <circle cx="1236.500" cy="697.500" r="5" fill="#1976b4"/>
      <path d="M1249.500 693.500h10v8h-10zM1251 700v-3l3 3zM1258 695v3l-3-3z" stroke="#ddd"/>
      <path d="M1266 693.500h10M1266 697.500h10M1266 701.500h10" stroke="#ddd" stroke-width="1.500"/>
    </svg>
  </div>
</footer>
<div class="h-[15px] shrink-0 bg-black"></div>
</body>
</html>
